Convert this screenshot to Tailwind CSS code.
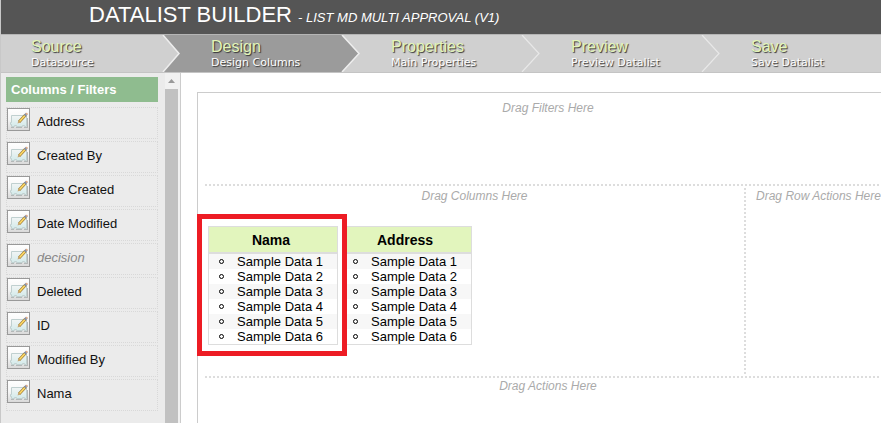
<!DOCTYPE html>
<html lang="en">
<head>
<meta charset="utf-8">
<title>Datalist Builder</title>
<script src="https://cdn.jsdelivr.net/npm/@tailwindcss/browser@4"></script>
</head>
<body class="h-screen flex flex-col overflow-hidden bg-white border-l border-[#c8c8c8] font-['Liberation_Sans',Arial,sans-serif] text-[13px] leading-[15px] text-black">
<svg class="absolute size-0" aria-hidden="true">
  <defs>
    <linearGradient id="paper" x1="0" y1="0" x2="0" y2="1"><stop offset="0" stop-color="#f2f5f5"/><stop offset="1" stop-color="#d3eaea"/></linearGradient>
    <linearGradient id="tile" x1="0" y1="0" x2="0" y2="1"><stop offset="0" stop-color="#fff"/><stop offset=".5" stop-color="#f6f6f6"/><stop offset="1" stop-color="#d8d8d8"/></linearGradient>
    <symbol id="edit" viewBox="0 0 23 23">
      <rect x=".5" y=".5" width="22" height="22" fill="url(#tile)" stroke="#999"/>
      <path d="M4.500 7.500H19.500V18.500H17.500V17.500H15.500V18.500H9.500V17.500H7.500V18.500H4.500V16.500H3.500V14.500H4.500Z" fill="url(#paper)" stroke="#c0d0d0"/>
      <path d="M4 19.500H7M9 19.500H15M17 19.500H21M20.500 10V19" stroke="#b4b8b8" fill="none"/>
      <path d="M12 14L18.500 7" stroke="#a07c38" stroke-width="3"/>
      <path d="M12.500 13.500L18 7.500" stroke="#ffdc66" stroke-width="1.600"/>
      <path d="M17.800 7.600L19.800 5.600" stroke="#8290a8" stroke-width="2.600"/>
      <circle cx="19.700" cy="5.800" r="1" fill="#e4aa82"/>
      <path d="M10.500 15.500L11.500 12.500L13.500 14.500Z" fill="#c7a672"/>
    </symbol>
  </defs>
</svg>

<header class="h-[34px] shrink-0 bg-[#555] pl-[88px] text-white">
  <h1 class="text-[22px] leading-[30px]">DATALIST BUILDER <em class="text-[13px]">- LIST MD MULTI APPROVAL (V1)</em></h1>
</header>

<nav class="h-[39px] shrink-0 flex border-y border-t-[#b5b5b5] border-b-[#c4c4c4] bg-[#d0d0d0]">
  <a href="#source" class="relative w-[180px] pl-[30px] pt-[3px]">
    <span class="block text-base leading-[18px] text-[#e3f5b8] [text-shadow:1px_1px_1px_#333]">Source</span>
    <span class="block font-['DejaVu_Sans',sans-serif] text-[11px] leading-[13px] text-white [text-shadow:1px_1px_1px_#333]">Datasource</span>
    <svg class="absolute right-0 top-0 h-full w-[20px]" viewBox="0 0 20 37" preserveAspectRatio="none"><path d="M2 0H20V37H2L18 18.500Z" fill="#9b9b9b"/><path d="M2 0L18 18.500L2 37" fill="none" stroke="#eee" stroke-width="1.500"/></svg>
  </a>
  <a href="#design" class="relative w-[180px] pl-[30px] pt-[3px] bg-[#9b9b9b]">
    <span class="block text-base leading-[18px] text-[#e3f5b8] [text-shadow:1px_1px_1px_#333]">Design</span>
    <span class="block font-['DejaVu_Sans',sans-serif] text-[11px] leading-[13px] text-white [text-shadow:1px_1px_1px_#333]">Design Columns</span>
    <svg class="absolute right-0 top-0 h-full w-[20px]" viewBox="0 0 20 37" preserveAspectRatio="none"><path d="M1 0H20V37H1L18 18.500Z" fill="#d0d0d0"/><path d="M1 0L18 18.500L1 37" fill="none" stroke="#eee" stroke-width="1.500"/></svg>
  </a>
  <a href="#properties" class="relative w-[180px] pl-[30px] pt-[3px]">
    <span class="block text-base leading-[18px] text-[#e3f5b8] [text-shadow:1px_1px_1px_#333]">Properties</span>
    <span class="block font-['DejaVu_Sans',sans-serif] text-[11px] leading-[13px] text-white [text-shadow:1px_1px_1px_#333]">Main Properties</span>
    <svg class="absolute right-0 top-0 h-full w-[20px]" viewBox="0 0 20 37" preserveAspectRatio="none"><path d="M1 0L18 18.500L1 37" fill="none" stroke="#e8e8e8" stroke-width="1.200"/></svg>
  </a>
  <a href="#preview" class="relative w-[180px] pl-[30px] pt-[3px]">
    <span class="block text-base leading-[18px] text-[#e3f5b8] [text-shadow:1px_1px_1px_#333]">Preview</span>
    <span class="block font-['DejaVu_Sans',sans-serif] text-[11px] leading-[13px] text-white [text-shadow:1px_1px_1px_#333]">Preview Datalist</span>
    <svg class="absolute right-0 top-0 h-full w-[20px]" viewBox="0 0 20 37" preserveAspectRatio="none"><path d="M1 0L18 18.500L1 37" fill="none" stroke="#e8e8e8" stroke-width="1.200"/></svg>
  </a>
  <a href="#save" class="flex-1 pl-[30px] pt-[3px]">
    <span class="block text-base leading-[18px] text-[#e3f5b8] [text-shadow:1px_1px_1px_#333]">Save</span>
    <span class="block font-['DejaVu_Sans',sans-serif] text-[11px] leading-[13px] text-white [text-shadow:1px_1px_1px_#333]">Save Datalist</span>
  </a>
</nav>

<div class="flex flex-1 min-h-0">
  <aside class="flex w-[180px] shrink-0 bg-[#ebebeb] border-r border-[#ccc]">
    <div class="flex-1 pl-[5px] pr-[7px] pt-1">
      <h2 class="bg-[#8fbc8f] text-white font-bold px-[5px] py-[5px] mb-[5px]">Columns / Filters</h2>
      <ul class="flex flex-col gap-[2px] text-[#111]">
        <li class="h-8 flex items-start gap-[7px] border border-dotted border-[#d8d8d8]"><svg class="size-[23px]"><use href="#edit"/></svg><span class="pt-[6px]">Address</span></li>
        <li class="h-8 flex items-start gap-[7px] border border-dotted border-[#d8d8d8]"><svg class="size-[23px]"><use href="#edit"/></svg><span class="pt-[6px]">Created By</span></li>
        <li class="h-8 flex items-start gap-[7px] border border-dotted border-[#d8d8d8]"><svg class="size-[23px]"><use href="#edit"/></svg><span class="pt-[6px]">Date Created</span></li>
        <li class="h-8 flex items-start gap-[7px] border border-dotted border-[#d8d8d8]"><svg class="size-[23px]"><use href="#edit"/></svg><span class="pt-[6px]">Date Modified</span></li>
        <li class="h-8 flex items-start gap-[7px] border border-dotted border-[#d8d8d8]"><svg class="size-[23px]"><use href="#edit"/></svg><em class="pt-[6px] text-[#888]">decision</em></li>
        <li class="h-8 flex items-start gap-[7px] border border-dotted border-[#d8d8d8]"><svg class="size-[23px]"><use href="#edit"/></svg><span class="pt-[6px]">Deleted</span></li>
        <li class="h-8 flex items-start gap-[7px] border border-dotted border-[#d8d8d8]"><svg class="size-[23px]"><use href="#edit"/></svg><span class="pt-[6px]">ID</span></li>
        <li class="h-8 flex items-start gap-[7px] border border-dotted border-[#d8d8d8]"><svg class="size-[23px]"><use href="#edit"/></svg><span class="pt-[6px]">Modified By</span></li>
        <li class="h-8 flex items-start gap-[7px] border border-dotted border-[#d8d8d8]"><svg class="size-[23px]"><use href="#edit"/></svg><span class="pt-[6px]">Nama</span></li>
      </ul>
    </div>
    <div class="w-[15px] flex flex-col items-stretch bg-[#f1f1f1] pr-[2px]" aria-hidden="true">
      <div class="h-4 flex items-center justify-center"><svg width="7" height="4" viewBox="0 0 7 4"><path d="M0 4L3.500 0L7 4Z" fill="#999"/></svg></div>
      <div class="flex-1 bg-[#c1c1c1]"></div>
    </div>
  </aside>

  <main class="flex-1 min-w-0 pl-4 pt-[19px] flex">
    <div class="flex-1 -mr-5 border-l border-t border-[#ccc] pl-[7px] pr-[10px] pt-[7px]">
      <section class="h-[86px] border-b-2 border-dotted border-[#ddd] text-center"><em class="text-xs leading-4 block text-[#aaa]">Drag Filters Here</em></section>
      <div class="h-[192px] flex border-b-2 border-dotted border-[#ddd] pt-[2px] pb-[2px]">
        <section class="flex-1 min-w-0">
          <em class="text-xs leading-4 block text-center text-[#aaa]">Drag Columns Here</em>
          <div class="flex gap-1 pl-[3px] pt-[22px]">
            <div class="relative w-[130px] border border-[#ddd]">
              <h3 class="h-[27px] pr-[4px] text-center text-sm leading-[26px] font-bold bg-[#e2f5bd] border-b-2 border-[#ddd]">Nama</h3>
              <ul class="[&>li]:pl-7 [&>li]:relative [&>li]:before:absolute [&>li]:before:left-[10px] [&>li]:before:top-[5px] [&>li]:before:size-[5px] [&>li]:before:rounded-full [&>li]:before:border [&>li]:before:border-black [&>li:nth-child(odd)]:bg-[#f7f7f7]">
                <li>Sample Data 1</li><li>Sample Data 2</li><li>Sample Data 3</li><li>Sample Data 4</li><li>Sample Data 5</li><li>Sample Data 6</li>
              </ul>
              <div class="absolute -left-3 -top-[13px] -right-[10px] -bottom-3 z-10 border-[5px] border-[#ed1c24] pointer-events-none"></div>
            </div>
            <div class="w-[130px] border border-[#ddd]">
              <h3 class="h-[27px] pr-[4px] text-center text-sm leading-[26px] font-bold bg-[#e2f5bd] border-b-2 border-[#ddd]">Address</h3>
              <ul class="[&>li]:pl-7 [&>li]:relative [&>li]:before:absolute [&>li]:before:left-[10px] [&>li]:before:top-[5px] [&>li]:before:size-[5px] [&>li]:before:rounded-full [&>li]:before:border [&>li]:before:border-black [&>li:nth-child(odd)]:bg-[#f7f7f7]">
                <li>Sample Data 1</li><li>Sample Data 2</li><li>Sample Data 3</li><li>Sample Data 4</li><li>Sample Data 5</li><li>Sample Data 6</li>
              </ul>
            </div>
          </div>
        </section>
        <section class="w-[147px] shrink-0 border-l-2 border-dotted border-[#ddd] text-center"><em class="text-xs leading-4 block whitespace-nowrap text-[#aaa]">Drag Row Actions Here</em></section>
      </div>
      <section class="text-center"><em class="text-xs leading-4 block text-[#aaa]">Drag Actions Here</em></section>
    </div>
  </main>
</div>
</body>
</html>
